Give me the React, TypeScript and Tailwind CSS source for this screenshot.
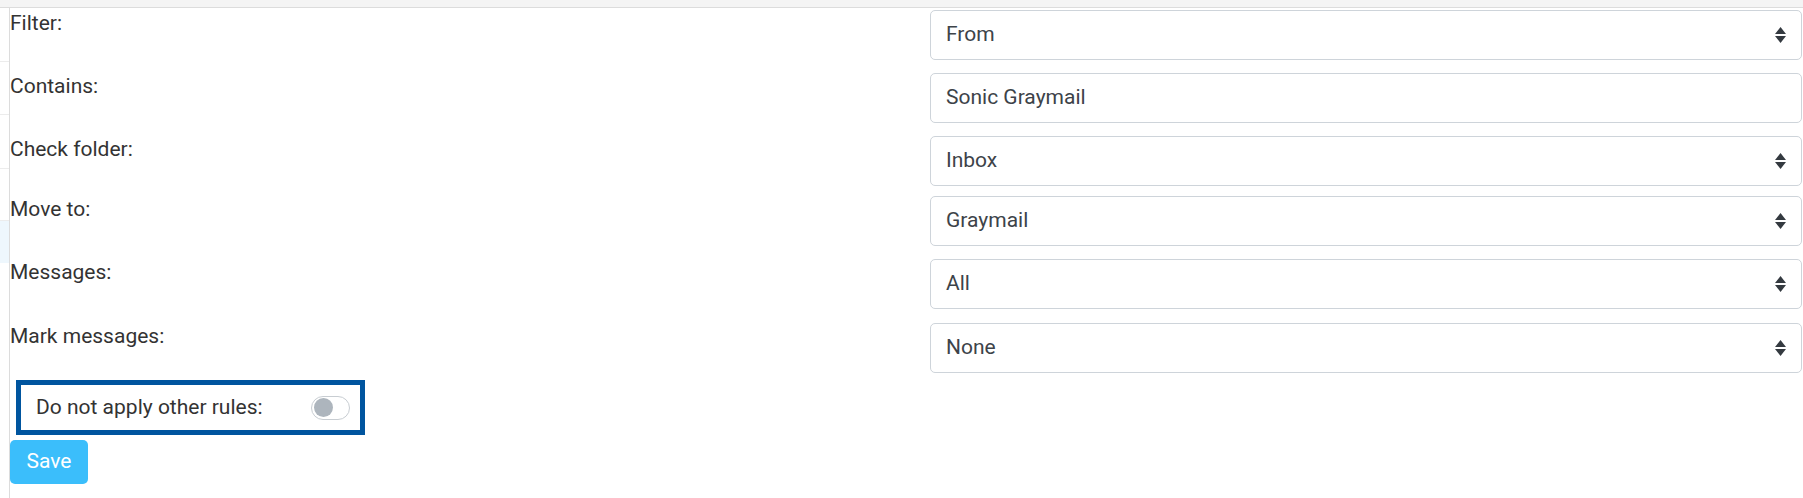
import { useState } from "react";

type Field = {
  label: string;
  value: string;
  select: boolean;
  gap: string;
};

const fields: Field[] = [
  { label: "Filter:", value: "From", select: true, gap: "mb-[11px]" },
  { label: "Contains:", value: "Sonic Graymail", select: false, gap: "mb-[11px]" },
  { label: "Check folder:", value: "Inbox", select: true, gap: "mb-[8px]" },
  { label: "Move to:", value: "Graymail", select: true, gap: "mb-[11px]" },
  { label: "Messages:", value: "All", select: true, gap: "mb-[12px]" },
  { label: "Mark messages:", value: "None", select: true, gap: "" },
];

function SortArrows() {
  return (
    <svg width="11" height="16" viewBox="0 0 11 16" className="shrink-0">
      <polygon points="5.5,0 11,7 0,7" fill="#343a40" />
      <polygon points="0,9 11,9 5.5,16" fill="#343a40" />
    </svg>
  );
}

function FieldRow({ field }: { field: Field }) {
  return (
    <div className={`flex items-start ${field.gap}`}>
      <div className="w-[920px] shrink-0 leading-[1.5] text-[#333]">{field.label}</div>
      <div className="mt-[2px] mr-[1px] flex h-[50px] flex-1 items-center justify-between rounded-[5px] border border-[#ced4da] bg-white pl-[15px] pr-[15px] text-[#3d4349]">
        <span>{field.value}</span>
        {field.select && <SortArrows />}
      </div>
    </div>
  );
}

export default function App() {
  const [stopRules, setStopRules] = useState(false);

  return (
    <div className="flex h-[498px] w-[1803px] flex-col overflow-hidden bg-white font-['Roboto','Liberation_Sans',sans-serif] text-[21px]">
      <div className="h-[8px] shrink-0 border-b border-[#dcdcdc] bg-[#f4f4f4]" />

      <div className="flex flex-1">
        {/* sliver of the list pane on the left */}
        <aside className="flex w-[10px] shrink-0 flex-col border-r border-[#dcdcdc]">
          <div className="h-[54px] border-b border-[#ececec]" />
          <div className="h-[53px] border-b border-[#ececec]" />
          <div className="h-[54px] border-b border-[#ececec]" />
          <div className="h-[52px] border-b border-[#ececec]" />
          <div className="h-[42px] bg-[#eef7fd]" />
        </aside>

        <main className="flex flex-1 flex-col">
          {fields.map((f) => (
            <FieldRow key={f.label} field={f} />
          ))}

          <div className="ml-[6px] mt-[7px] flex h-[55px] w-[349px] items-center justify-between border-[5px] border-[#00559f] pl-[15px] pr-[10px] text-[#333]">
            <span>Do not apply other rules:</span>
            <button
              type="button"
              onClick={() => setStopRules((v) => !v)}
              className={`flex h-[24px] w-[39px] items-center rounded-full border px-[2px] ${
                stopRules ? "justify-end border-[#0d6efd] bg-[#0d6efd]" : "justify-start border-[#c8cdd2] bg-white"
              }`}
              aria-label="Do not apply other rules"
            >
              <span className={`h-[19px] w-[19px] rounded-full ${stopRules ? "bg-white" : "bg-[#adb5bd]"}`} />
            </button>
          </div>

          <button
            type="button"
            className="mt-[5px] h-[44px] w-[78px] rounded-[5px] bg-[#3bbefb] text-center text-white"
          >
            Save
          </button>
        </main>
      </div>
    </div>
  );
}
